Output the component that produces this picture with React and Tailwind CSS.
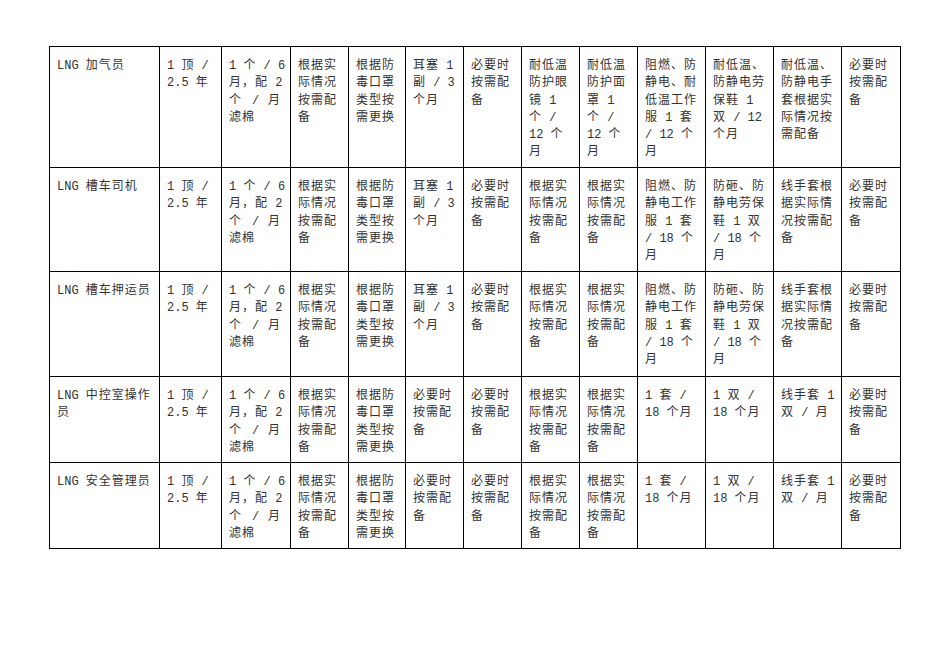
const base = ["1 顶 /", "2.5 年"];
const filter = ["|1 个 / 6", "|月，配 2", "|个 / 月", "滤棉"];
const asNeeded = ["根据实", "际情况", "按需配", "备"];
const mask = ["根据防", "毒口罩", "类型按", "需更换"];
const plug = ["耳塞 1", "副 / 3", "个月"];
const whenNeeded = ["必要时", "按需配", "备"];

const rows = [
  {
    cells: [
      ["LNG 加气员"], base, filter, asNeeded, mask, plug, whenNeeded,
      ["耐低温", "防护眼", "镜 1", "个 /", "12 个", "月"],
      ["耐低温", "防护面", "罩 1", "个 /", "12 个", "月"],
      ["阻燃、防", "静电、耐", "低温工作", "服 1 套", "/ 12 个", "月"],
      ["耐低温、", "防静电劳", "保鞋 1", "双 / 12", "个月"],
      ["耐低温、", "防静电手", "套根据实", "际情况按", "需配备"],
      whenNeeded,
    ],
  },
  {
    cells: [
      ["LNG 槽车司机"], base, filter, asNeeded, mask, plug, whenNeeded, asNeeded, asNeeded,
      ["阻燃、防", "静电工作", "服 1 套", "/ 18 个", "月"],
      ["防砸、防", "静电劳保", "鞋 1 双", "/ 18 个", "月"],
      ["线手套根", "据实际情", "况按需配", "备"],
      whenNeeded,
    ],
  },
  {
    cells: [
      ["LNG 槽车押运员"], base, filter, asNeeded, mask, plug, whenNeeded, asNeeded, asNeeded,
      ["阻燃、防", "静电工作", "服 1 套", "/ 18 个", "月"],
      ["防砸、防", "静电劳保", "鞋 1 双", "/ 18 个", "月"],
      ["线手套根", "据实际情", "况按需配", "备"],
      whenNeeded,
    ],
  },
  {
    cells: [
      ["|LNG 中控室操作", "员"], base, filter, asNeeded, mask, whenNeeded, whenNeeded, asNeeded, asNeeded,
      ["1 套 /", "18 个月"],
      ["1 双 /", "18 个月"],
      ["线手套 1", "双 / 月"],
      whenNeeded,
    ],
  },
  {
    cells: [
      ["LNG 安全管理员"], base, filter, asNeeded, mask, whenNeeded, whenNeeded, asNeeded, asNeeded,
      ["1 套 /", "18 个月"],
      ["1 双 /", "18 个月"],
      ["线手套 1", "双 / 月"],
      whenNeeded,
    ],
  },
];

// latin runs are narrower in the original, give them a mono face
const Line = ({ text }) => {
  const justify = text.startsWith("|");
  const t = justify ? text.slice(1) : text;
  const parts = t.split(/([\x00-\x7F]+)/).filter(Boolean);
  return (
    <div
      className={
        justify
          ? "h-[17.3px] whitespace-nowrap text-justify [text-align-last:justify]"
          : "h-[17.3px] whitespace-nowrap"
      }
    >
      {parts.map((p, i) =>
        /^[\x00-\x7F]+$/.test(p) ? (
          <span key={i} className="font-['Liberation_Mono'] text-[12px] tracking-normal whitespace-pre text-[#333]">
            {p}
          </span>
        ) : (
          <span key={i}>{p}</span>
        )
      )}
    </div>
  );
};

const App = () => {
  return (
    <div className="min-h-screen bg-white pt-[46px] pl-[49px]">
      <div className="grid w-fit grid-cols-[110px_62px_69px_58px_57px_58px_58px_58px_58px_68px_68px_68px_59px] grid-rows-[121px_104px_105px_86px_86px] border-l border-t border-black font-['Noto_Sans_CJK_SC',sans-serif] text-[12px] leading-[17.3px] tracking-[1px] text-[#333]">
        {rows.map((row, r) =>
          row.cells.map((lines, c) => (
            <div
              key={r + "-" + c}
              className="overflow-hidden border-r border-b border-black pl-[7px] pr-[9px] pt-[8px]"
            >
              {lines.map((l, i) => (
                <Line key={i} text={l} />
              ))}
            </div>
          ))
        )}
      </div>
    </div>
  );
};

export default App;
